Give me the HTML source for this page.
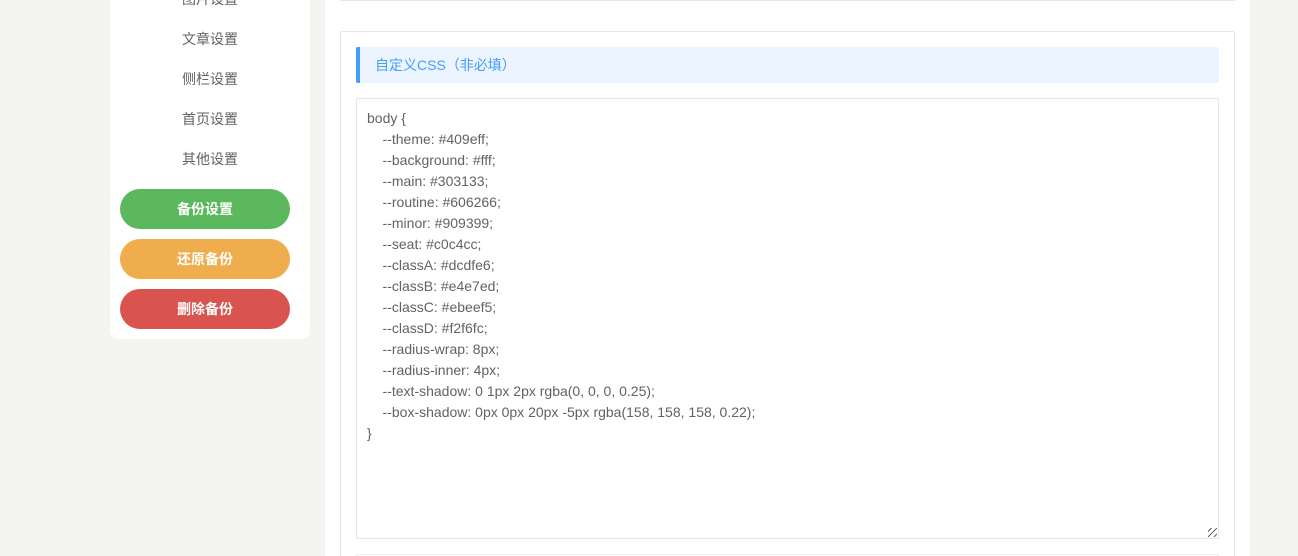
<!DOCTYPE html>
<html style="width:1298px;height:556px;overflow:hidden"><head><meta charset="utf-8"><style>
*{box-sizing:border-box;margin:0;padding:0}
body{width:1298px;height:556px;overflow:hidden;background:#f4f4f0;font-family:"Liberation Sans","Noto Sans CJK SC",sans-serif;position:relative}
.side{position:absolute;left:110px;top:-20px;width:200px;height:359px;background:#fff;border-radius:8px}
.item{position:absolute;left:0;width:200px;text-align:center;font-size:14px;color:#606266}
.btn{position:absolute;left:10px;width:170px;height:40px;border-radius:20px;color:#fff;font-size:14px;font-weight:bold;text-align:center;line-height:40px}
.main{position:absolute;left:325px;top:0;width:925px;height:556px;background:#fff;overflow:hidden}
.topline{position:absolute;left:15px;top:0;width:895px;height:1px;background:#e6e6e6}
.box{position:absolute;left:15px;top:31px;width:895px;height:530px;border:1px solid #e6e6e6;border-radius:2px}
.title{position:absolute;left:15px;top:15px;width:863px;height:36px;background:#ecf5ff;border-left:4px solid #409eff;border-radius:2px;color:#409eff;font-size:14px;line-height:36px;padding-left:15px}
.ta{position:absolute;left:15px;top:66px;width:863px;height:441px;border:1px solid #e6e6e6;border-radius:2px;padding:9px 10px;font-size:14px;line-height:21px;color:#606266;white-space:pre}
.grip{position:absolute;right:1px;bottom:1px;width:9px;height:9px;background:repeating-linear-gradient(135deg,transparent 0 2px,#666 2px 3px,transparent 3px 4px)}
.next{position:absolute;left:15px;top:522px;width:863px;height:20px;border:1px solid #eee;border-radius:2px}
</style></head><body>
<div class="side">
<div class="item" style="top:9px">图片设置</div>
<div class="item" style="top:49px">文章设置</div>
<div class="item" style="top:89px">侧栏设置</div>
<div class="item" style="top:129px">首页设置</div>
<div class="item" style="top:169px">其他设置</div>
<div class="btn" style="top:209px;background:#5cb85c">备份设置</div>
<div class="btn" style="top:259px;background:#f0ad4e">还原备份</div>
<div class="btn" style="top:309px;background:#d9534f">删除备份</div>
</div>
<div class="main">
<div class="topline"></div>
<div class="box">
<div class="title">自定义CSS（非必填）</div>
<div class="ta">body {
    --theme: #409eff;
    --background: #fff;
    --main: #303133;
    --routine: #606266;
    --minor: #909399;
    --seat: #c0c4cc;
    --classA: #dcdfe6;
    --classB: #e4e7ed;
    --classC: #ebeef5;
    --classD: #f2f6fc;
    --radius-wrap: 8px;
    --radius-inner: 4px;
    --text-shadow: 0 1px 2px rgba(0, 0, 0, 0.25);
    --box-shadow: 0px 0px 20px -5px rgba(158, 158, 158, 0.22);
}<div class="grip"></div></div>
<div class="next"></div>
</div>
</div>
</body></html>
